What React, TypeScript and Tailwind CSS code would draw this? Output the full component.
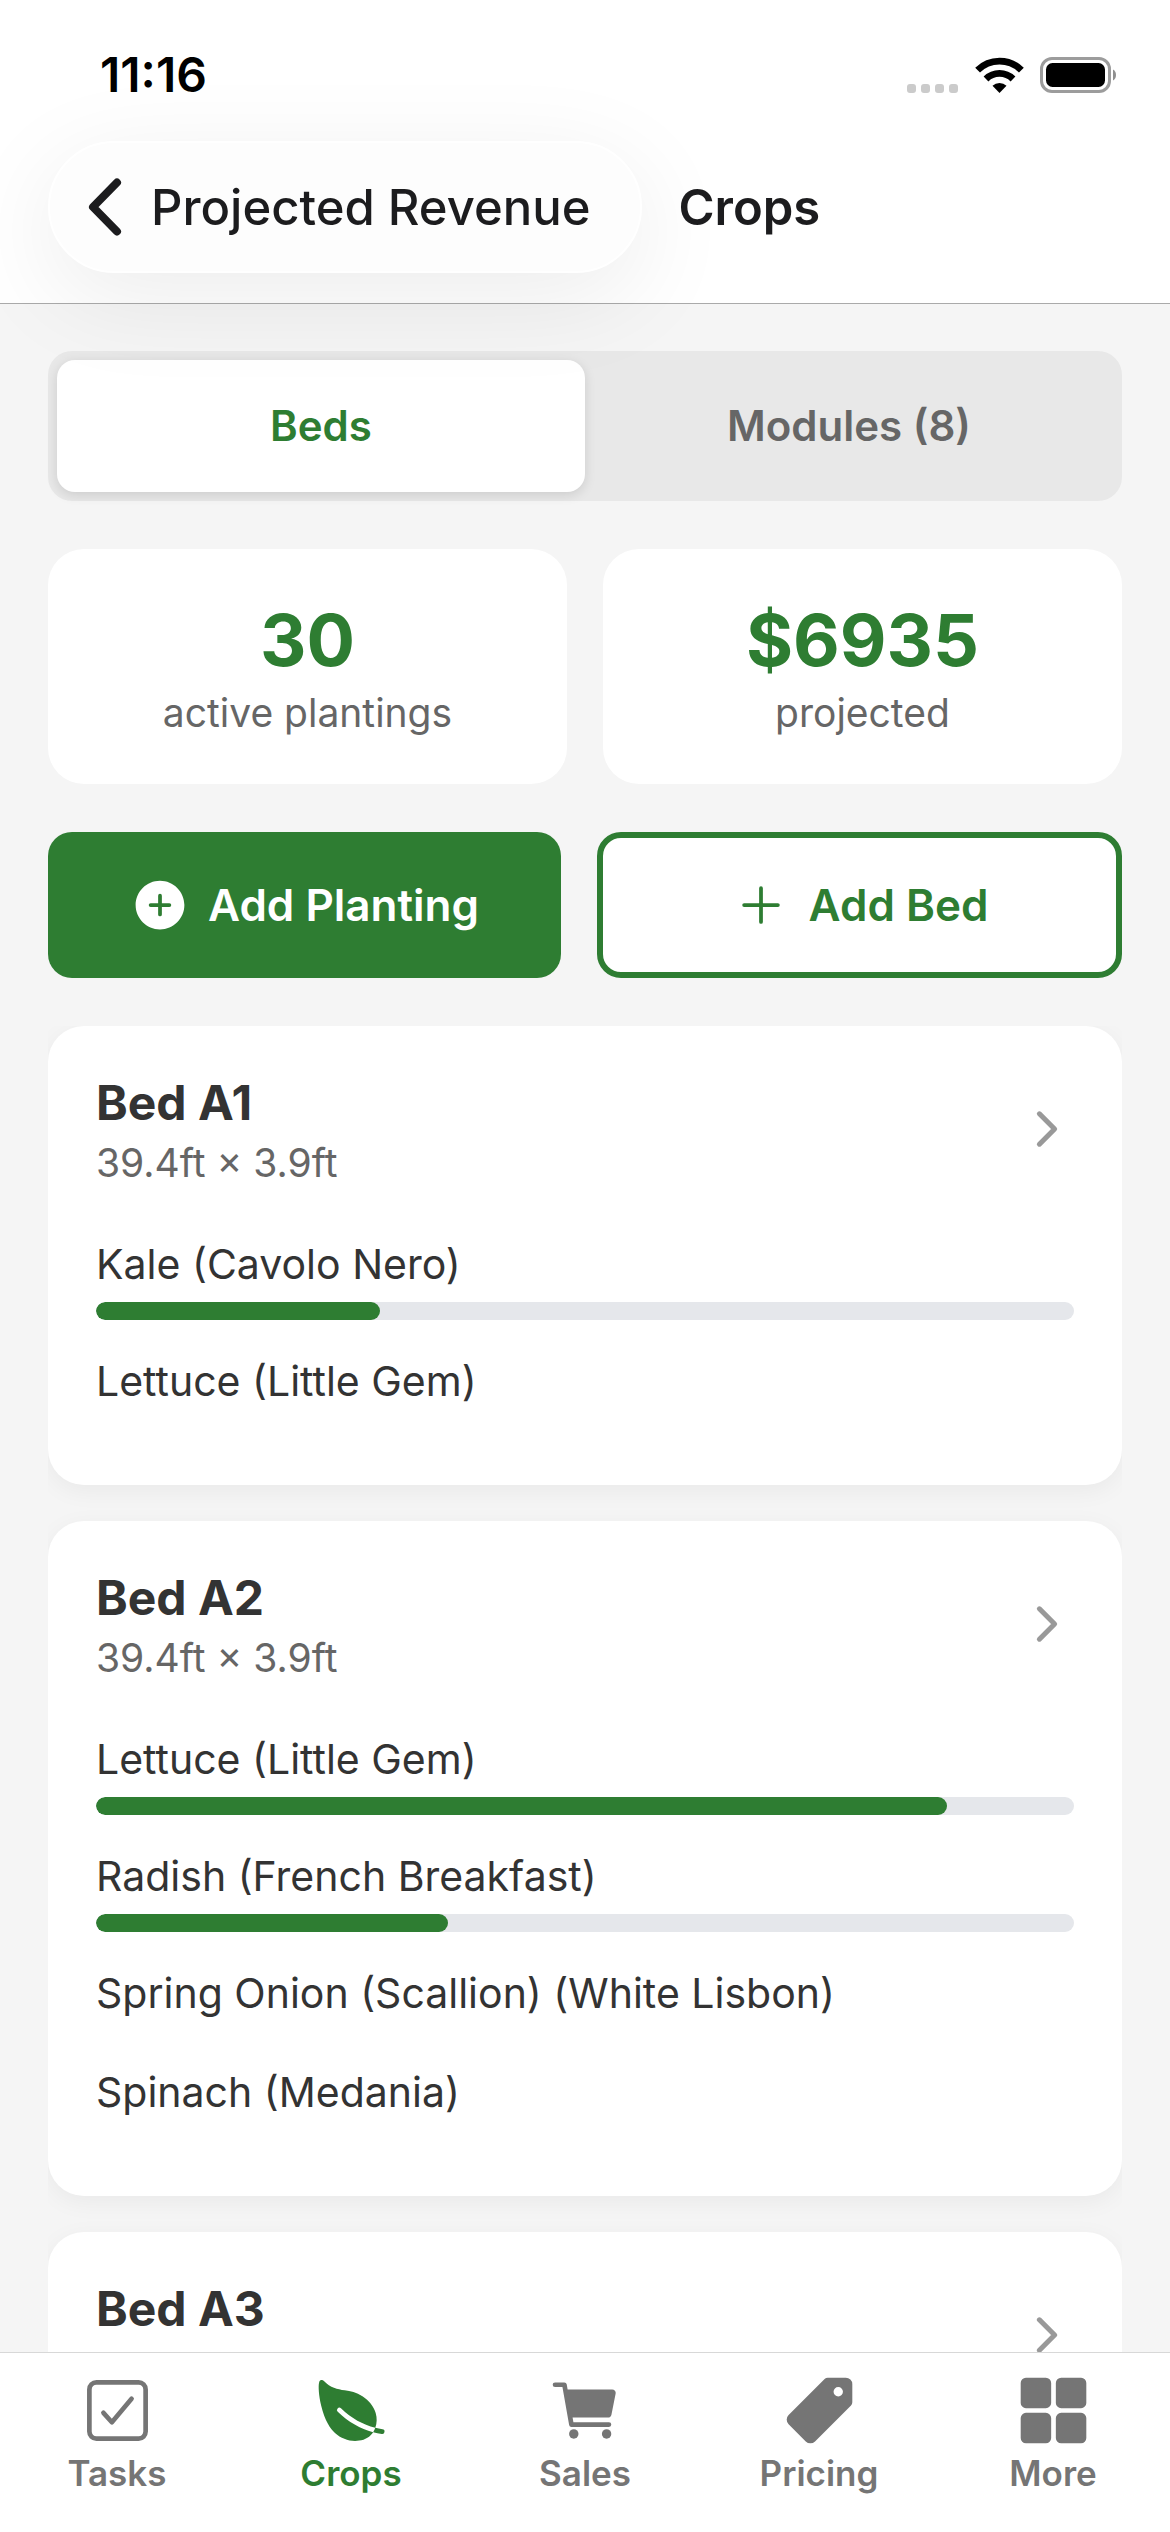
import { useState } from "react";
import {
  IoAdd,
  IoAddCircle,
  IoCart,
  IoCheckboxOutline,
  IoChevronForward,
  IoGrid,
  IoLeaf,
  IoPricetag,
} from "react-icons/io5";
import type { IconType } from "react-icons";

interface Planting {
  name: string;
  progress?: number;
}

interface Bed {
  name: string;
  size: string;
  plantings: Planting[];
}

const BEDS: Bed[] = [
  {
    name: "Bed A1",
    size: "39.4ft × 3.9ft",
    plantings: [
      { name: "Kale (Cavolo Nero)", progress: 29 },
      { name: "Lettuce (Little Gem)" },
    ],
  },
  {
    name: "Bed A2",
    size: "39.4ft × 3.9ft",
    plantings: [
      { name: "Lettuce (Little Gem)", progress: 87 },
      { name: "Radish (French Breakfast)", progress: 36 },
      { name: "Spring Onion (Scallion) (White Lisbon)" },
      { name: "Spinach (Medania)" },
    ],
  },
  { name: "Bed A3", size: "39.4ft × 3.9ft", plantings: [] },
];

const TABS: { label: string; icon: IconType }[] = [
  { label: "Tasks", icon: IoCheckboxOutline },
  { label: "Crops", icon: IoLeaf },
  { label: "Sales", icon: IoCart },
  { label: "Pricing", icon: IoPricetag },
  { label: "More", icon: IoGrid },
];

const STATS = [
  { value: "30", label: "active plantings" },
  { value: "$6935", label: "projected" },
];

function StatusBar() {
  return (
    <div className="flex items-center justify-between pt-12 pb-[39px] pl-[100px] pr-[54px]">
      <span className="text-[48px] leading-[54px] font-semibold text-black">11:16</span>
      <div className="flex items-center">
        <svg width="52" height="36" viewBox="0 0 52 36" fill="#cbcbcb">
          <rect x="0" y="27" width="9" height="9" rx="3" />
          <rect x="14" y="27" width="9" height="9" rx="3" />
          <rect x="28" y="27" width="9" height="9" rx="3" />
          <rect x="42" y="27" width="9" height="9" rx="3" />
        </svg>
        <svg className="ml-4" width="49" height="36" viewBox="0 0 49 36" fill="none">
          <path d="M2.6 13.2a31 31 0 0 1 43.8 0" stroke="#000" strokeWidth="6.8" />
          <path d="M11 22a19.2 19.2 0 0 1 27 0" stroke="#000" strokeWidth="6.8" />
          <path d="M24.5 36l-7-7.2a10 10 0 0 1 14 0z" fill="#000" />
        </svg>
        <svg className="ml-4" width="76" height="36" viewBox="0 0 76 36" fill="none">
          <rect x="1.5" y="1.5" width="68" height="33" rx="10.5" stroke="#9c9c9c" strokeWidth="3" />
          <rect x="6" y="6" width="59" height="24" rx="6.5" fill="#000" />
          <path d="M73 12.5c4 2 4 9 0 11z" fill="#8f8f8f" />
        </svg>
      </div>
    </div>
  );
}

function Header() {
  return (
    <header className="relative z-10 border-b border-[#aaaaaa] bg-white">
      <StatusBar />
      <div className="flex items-center gap-9 px-12 pb-[30px]">
        <button
          type="button"
          className="flex h-[132px] items-center gap-[29px] rounded-full border-2 border-white bg-[#fdfdfd] pl-[38px] pr-[50px] shadow-[0_24px_100px_rgba(0,0,0,0.08)]"
        >
          <svg width="34" height="58" viewBox="0 0 34 58" fill="none">
            <path d="M29 4.500 5 29l24 24.500" stroke="#1c1c1e" strokeWidth="8" strokeLinecap="round" strokeLinejoin="round" />
          </svg>
          <span className="pt-0.5 text-[49px] leading-[60px] font-medium text-[#1c1c1e]">Projected Revenue</span>
        </button>
        <h1 className="pt-0.5 text-[49px] leading-[60px] font-semibold text-[#1c1c1e]">Crops</h1>
      </div>
    </header>
  );
}

function SegmentedControl() {
  const [active, setActive] = useState("beds");
  const options = [
    { id: "beds", label: "Beds" },
    { id: "modules", label: "Modules (8)" },
  ];

  return (
    <div role="tablist" className="flex rounded-3xl bg-[#e8e8e8] p-[9px]">
      {options.map((option) => (
        <button
          key={option.id}
          type="button"
          role="tab"
          aria-selected={active === option.id}
          onClick={() => setActive(option.id)}
          className={
            active === option.id
              ? "h-[132px] flex-1 rounded-[18px] bg-white pb-0.5 text-[42px] font-semibold text-[#2e7d32] shadow-[0_3px_12px_rgba(0,0,0,0.12)]"
              : "h-[132px] flex-1 rounded-[18px] pb-0.5 text-[42px] font-semibold text-[#666666]"
          }
        >
          {option.label}
        </button>
      ))}
    </div>
  );
}

function PlantingRow({ planting }: { planting: Planting }) {
  return (
    <li className="py-[18px]">
      <p className="mb-3 text-[41px] leading-[51px] text-[#333333]">{planting.name}</p>
      {planting.progress !== undefined && (
        <div
          role="progressbar"
          aria-label={planting.name}
          aria-valuenow={planting.progress}
          className="h-[18px] overflow-hidden rounded-full bg-[#e5e7eb]"
        >
          <div className="h-full rounded-full bg-[#2e7d32]" style={{ width: `${planting.progress}%` }} />
        </div>
      )}
    </li>
  );
}

function BedCard({ bed }: { bed: Bed }) {
  return (
    <article className="rounded-[36px] bg-white p-12 shadow-[0_6px_24px_rgba(0,0,0,0.05)]">
      <div className="mb-[35px] flex items-start justify-between">
        <div>
          <h2 className="text-[48px] leading-[57px] font-bold text-[#333333]">{bed.name}</h2>
          <p className="mt-2 text-[39px] leading-[47px] text-[#666666]">{bed.size}</p>
        </div>
        <IoChevronForward size={54} className="mt-7 text-[#999999]" />
      </div>
      <ul>
        {bed.plantings.map((planting) => (
          <PlantingRow key={planting.name} planting={planting} />
        ))}
      </ul>
    </article>
  );
}

function TabBar() {
  return (
    <nav className="relative z-10 flex h-[180px] shrink-0 border-t border-[#d8d8d8] bg-white pt-5">
      {TABS.map(({ label, icon: Icon }) => (
        <a
          key={label}
          href={`#${label.toLowerCase()}`}
          aria-current={label === "Crops" ? "page" : undefined}
          className={
            label === "Crops"
              ? "flex flex-1 flex-col items-center gap-0.5 text-[#2e7d32]"
              : "flex flex-1 flex-col items-center gap-0.5 text-[#757575]"
          }
        >
          <Icon size={75} />
          <span className="text-[35px] leading-[46px] font-semibold">{label}</span>
        </a>
      ))}
    </nav>
  );
}

export default function App() {
  return (
    <div className="flex h-screen flex-col bg-[#f5f5f5] font-['Inter',sans-serif]">
      <Header />

      <main className="flex min-h-0 flex-1 flex-col gap-12 overflow-hidden px-12 pt-[47px]">
        <SegmentedControl />

        <section className="grid grid-cols-2 gap-9">
          {STATS.map((stat) => (
            <div key={stat.label} className="rounded-[36px] bg-white p-12 text-center">
              <p className="text-[72px] leading-[86px] font-bold text-[#2e7d32]">{stat.value}</p>
              <p className="mt-1.5 text-[39px] leading-[47px] text-[#666666]">{stat.label}</p>
            </div>
          ))}
        </section>

        <div className="flex gap-9">
          <button
            type="button"
            className="flex h-[146px] flex-1 items-center justify-center gap-[18px] rounded-3xl bg-[#2e7d32] text-[44px] font-semibold text-white"
          >
            <IoAddCircle size={60} />
            Add Planting
          </button>
          <button
            type="button"
            className="flex h-[146px] flex-1 items-center justify-center gap-[18px] rounded-3xl border-[6px] border-[#2e7d32] bg-white text-[44px] font-semibold text-[#2e7d32]"
          >
            <IoAdd size={60} />
            Add Bed
          </button>
        </div>

        <section className="flex min-h-0 flex-1 flex-col gap-9 overflow-clip">
          {BEDS.map((bed) => (
            <BedCard key={bed.name} bed={bed} />
          ))}
        </section>
      </main>

      <TabBar />
    </div>
  );
}
